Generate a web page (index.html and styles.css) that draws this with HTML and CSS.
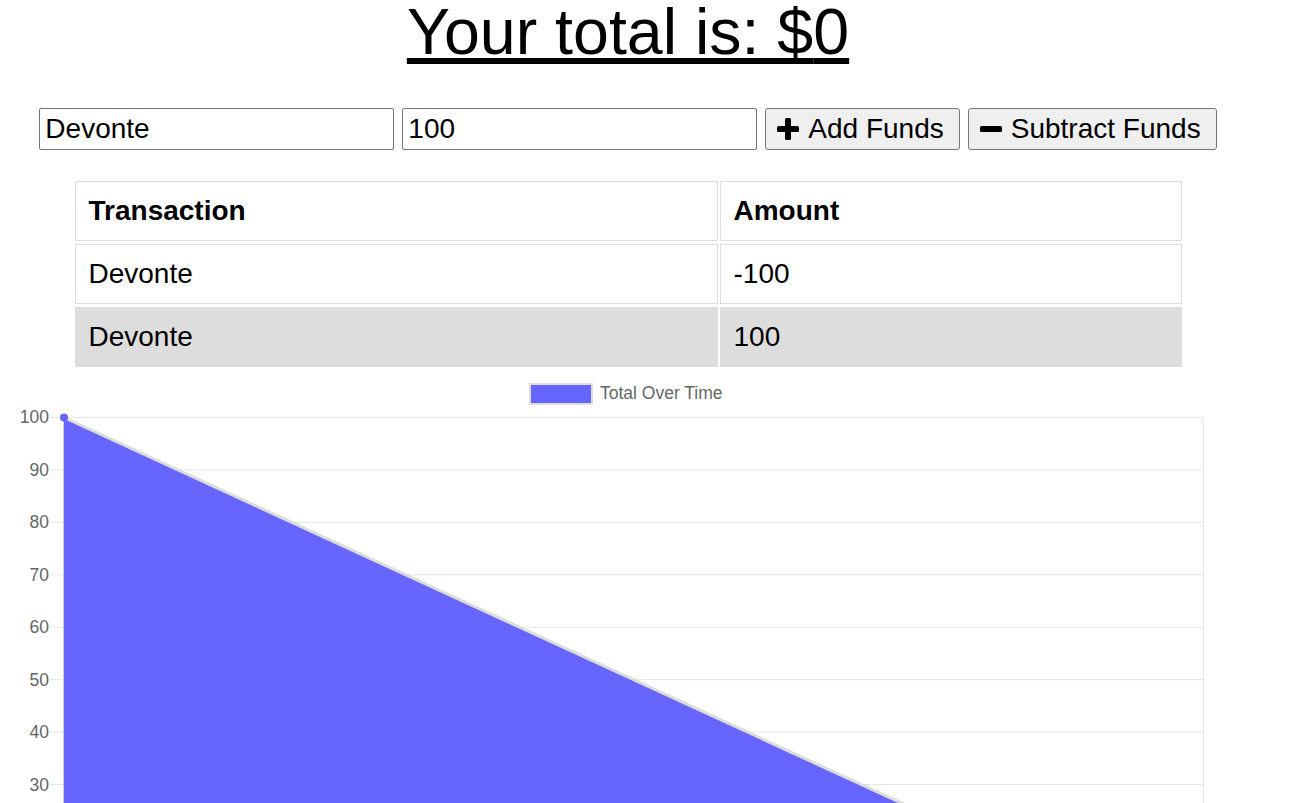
FILE: index.html
```html
<!DOCTYPE html>
<html lang="en">
<head>
<meta charset="utf-8">
<title>Budget Tracker</title>
<link rel="stylesheet" href="styles.css">
</head>
<body>
<div class="page">
  <h1 class="total">Your total is: $<span class="total-num">0</span></h1>

  <div class="form">
    <input class="field" type="text" value="Devonte">
    <input class="field" type="number" value="100">
    <button class="btn btn-add">
      <svg class="icon" viewBox="0 0 22 22" width="22" height="22" aria-hidden="true">
        <rect x="8" y="0" width="6" height="22" rx="1.5" fill="#000"/>
        <rect x="0" y="8" width="22" height="6" rx="1.5" fill="#000"/>
      </svg>Add Funds
    </button>
    <button class="btn btn-sub">
      <svg class="icon" viewBox="0 0 22 22" width="22" height="22" aria-hidden="true">
        <rect x="0" y="8" width="22" height="6" rx="1.5" fill="#000"/>
      </svg>Subtract Funds
    </button>
  </div>

  <table class="tx">
    <colgroup><col class="col-name"><col class="col-amt"></colgroup>
    <thead>
      <tr><th>Transaction</th><th>Amount</th></tr>
    </thead>
    <tbody>
      <tr><td>Devonte</td><td>-100</td></tr>
      <tr class="alt"><td>Devonte</td><td>100</td></tr>
    </tbody>
  </table>

  <svg class="chart" width="1256" height="620" viewBox="0 370 1256 620" aria-label="Total Over Time chart">
    <!-- legend -->
    <rect x="530" y="384" width="62" height="20" fill="#6666ff" stroke="#dedede" stroke-width="2"/>
    <text class="lbl" x="600" y="399">Total Over Time</text>

    <!-- grid -->
    <g stroke="#e6e6e6" stroke-width="1">
      <line x1="50" y1="417.5" x2="1203" y2="417.5"/>
      <line x1="50" y1="469.9" x2="1203" y2="469.9"/>
      <line x1="50" y1="522.4" x2="1203" y2="522.4"/>
      <line x1="50" y1="574.8" x2="1203" y2="574.8"/>
      <line x1="50" y1="627.2" x2="1203" y2="627.2"/>
      <line x1="50" y1="679.6" x2="1203" y2="679.6"/>
      <line x1="50" y1="732.1" x2="1203" y2="732.1"/>
      <line x1="50" y1="784.5" x2="1203" y2="784.5"/>
      <line x1="50" y1="836.9" x2="1203" y2="836.9"/>
      <line x1="50" y1="889.4" x2="1203" y2="889.4"/>
      <line x1="1203.5" y1="417" x2="1203.5" y2="955"/>
    </g>
    <line x1="63.5" y1="417" x2="63.5" y2="955" stroke="#d0d0d0" stroke-width="1"/>

    <!-- y labels -->
    <g class="lbl" text-anchor="end">
      <text x="49" y="423">100</text>
      <text x="49" y="476">90</text>
      <text x="49" y="528">80</text>
      <text x="49" y="581">70</text>
      <text x="49" y="633">60</text>
      <text x="49" y="686">50</text>
      <text x="49" y="738">40</text>
      <text x="49" y="791">30</text>
      <text x="49" y="843">20</text>
      <text x="49" y="896">10</text>
      <text x="49" y="948">0</text>
    </g>

    <!-- area -->
    <polygon points="64,417.5 1203,941.8 64,941.8" fill="#6666ff"/>
    <line x1="64" y1="417.5" x2="1203" y2="941.8" stroke="#dcdcdc" stroke-width="3"/>
    <circle cx="64" cy="417.5" r="4" fill="#6666ff"/>
  </svg>
</div>
</body>
</html>
```

FILE: styles.css
```css
html, body {
  margin: 0;
  padding: 0;
  background: #fff;
}

body {
  font-family: "Liberation Sans", Arial, sans-serif;
  color: #000;
}

.page {
  width: 1256px;
}

.total {
  margin: 0;
  font-size: 64.5px;
  line-height: 64px;
  font-weight: normal;
  text-align: center;
  text-decoration: underline;
}

.form {
  margin-top: 44px;
  display: flex;
  justify-content: center;
  gap: 8px;
}

.field {
  box-sizing: border-box;
  width: 355px;
  height: 42px;
  margin: 0;
  padding: 0 5px;
  border: 1px solid #767676;
  border-radius: 2px;
  font-family: "Liberation Sans", Arial, sans-serif;
  font-size: 28px;
  color: #000;
  background: #fff;
  -moz-appearance: textfield;
}

.field::-webkit-outer-spin-button,
.field::-webkit-inner-spin-button {
  -webkit-appearance: none;
  margin: 0;
}

.btn {
  box-sizing: border-box;
  height: 42px;
  margin: 0;
  padding: 0 15px 0 11px;
  display: inline-flex;
  align-items: center;
  border: 1px solid #767676;
  border-radius: 3px;
  background: #efefef;
  font-family: "Liberation Sans", Arial, sans-serif;
  font-size: 28px;
  color: #000;
}

.icon {
  display: block;
  margin-right: 9px;
  flex: none;
}

.tx {
  margin: 28px auto 0;
  width: 1111px;
  table-layout: fixed;
  border-spacing: 2px 3px;
  font-size: 28px;
}

.col-name { width: 643px; }

.tx th,
.tx td {
  border: 1px solid #ddd;
  padding: 13px 13px;
  line-height: 32px;
  text-align: left;
}

.tx th { font-weight: bold; }

.tx .alt td { background: #ddd; }

.chart {
  display: block;
}

.lbl {
  font-family: "Liberation Sans", Arial, sans-serif;
  font-size: 17.5px;
  fill: #666;
}
```
